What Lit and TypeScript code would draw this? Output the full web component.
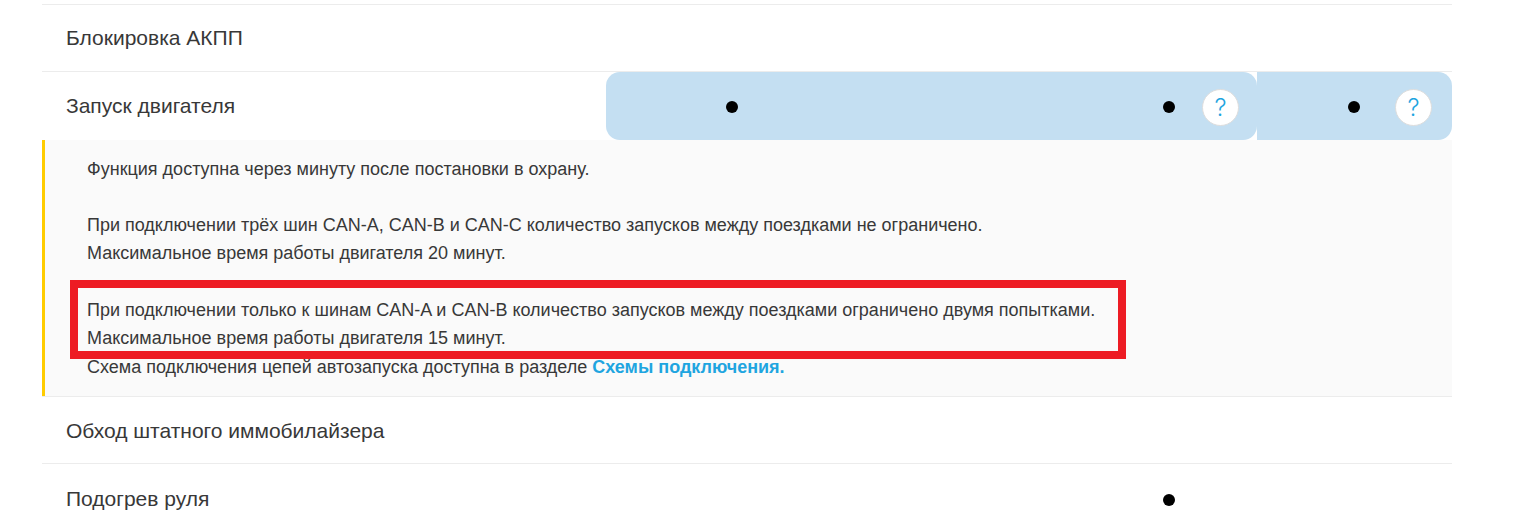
import { LitElement, html, css } from "lit";
import { customElement } from "lit/decorators.js";

@customElement("app-root")
export class AppRoot extends LitElement {
  static styles = css`
    :host { display: block; height: 526px; overflow: hidden; background: #fff; font-family: "Liberation Sans", Arial, sans-serif; color: #383838; }
    .wrap { position: relative; margin: 0 61px 0 42px; padding-top: 4px; }
    .row { display: grid; grid-template-columns: 564px 252px 223px 176px 195px; height: 66px; border-top: 1px solid #ececec; align-items: center; }
    .row.band { height: 68px; }
    .row.last { height: 68px; }
    .label { font-size: 21px; padding-left: 24px; }
    .low { padding-top: 2px; }
    .cell { display: flex; align-items: center; justify-content: center; height: 100%; box-sizing: border-box; padding-top: 2px; }
    .last .cell { padding-top: 4px; }
    .dot { width: 12px; height: 12px; border-radius: 50%; background: #000; }
    .group { grid-column: 2 / 5; display: grid; grid-template-columns: 252px 223px 176px; height: 100%; background: #c4dff2; border-radius: 14px; position: relative; }
    .solo { background: #c4dff2; border-radius: 0 14px 14px 0; position: relative; height: 100%; display: flex; align-items: center; justify-content: center; padding: 2px 1px 0 0; box-sizing: border-box; }
    .help { position: absolute; top: 17px; box-sizing: border-box; width: 37px; height: 37px; border-radius: 50%; background: #fff; border: 1px solid #ddd; color: #1fa5e0; display: flex; align-items: center; justify-content: center; font-family: Inter, sans-serif; font-size: 24px; font-weight: 300; }
    .group .help { right: 18px; }
    .solo .help { right: 20px; }
    .panel { background: #fafafa; border-left: 3px solid #fc0; padding: 15px 0 0 42px; font-size: 18px; line-height: 28px; height: 256px; box-sizing: border-box; }
    .panel p { margin: 0; }
    .gap { margin-top: 28px !important; }
    .gap2 { margin-top: 29px !important; }
    .tail { margin-top: 1px !important; }
    a { color: #1fa5e0; font-weight: bold; text-decoration: none; }
    .mark { position: absolute; left: 28px; top: 280px; width: 1056px; height: 79px; box-sizing: border-box; border: 8px solid #ed1c24; pointer-events: none; }
  `;

  render() {
    return html`<div class="wrap">
      <div class="row"><div class="label">Блокировка АКПП</div></div>
      <div class="row band">
        <div class="label">Запуск двигателя</div>
        <div class="group">
          <div class="cell"><span class="dot"></span></div>
          <div class="cell"></div>
          <div class="cell"><span class="dot"></span></div>
          <span class="help">?</span>
        </div>
        <div class="solo"><span class="dot"></span><span class="help">?</span></div>
      </div>
      <div class="panel">
        <p>Функция доступна через минуту после постановки в охрану.</p>
        <p class="gap">При подключении трёх шин CAN-A, CAN-B и CAN-C количество запусков между поездками не ограничено.</p>
        <p>Максимальное время работы двигателя 20 минут.</p>
        <p class="gap2">При подключении только к шинам CAN-A и CAN-B количество запусков между поездками ограничено двумя попытками.</p>
        <p>Максимальное время работы двигателя 15 минут.</p>
        <p class="tail">Схема подключения цепей автозапуска доступна в разделе <a href="#">Схемы подключения.</a></p>
      </div>
      <div class="row"><div class="label low">Обход штатного иммобилайзера</div></div>
      <div class="row last">
        <div class="label low">Подогрев руля</div>
        <div></div><div></div>
        <div class="cell"><span class="dot"></span></div>
      </div>
      <div class="mark"></div>
    </div>`;
  }
}
